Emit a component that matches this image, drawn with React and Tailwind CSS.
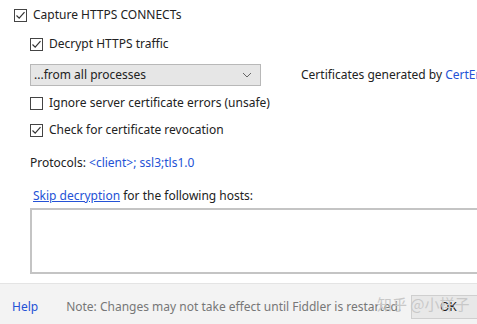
import React from "react";

const Check = ({ checked }) => (
  <span className="w-[13px] h-[13px] border border-[#444] bg-white flex items-center justify-center shrink-0">
    {checked && (
      <svg width="11" height="11" viewBox="0 0 11 11">
        <path d="M1.5 5.5 L4.2 8.2 L9.5 2.2" fill="none" stroke="#333" strokeWidth="1.2" />
      </svg>
    )}
  </span>
);

const Option = ({ checked, label, className }) => (
  <div className={`flex items-center gap-[6px] h-[20px] ${className}`}>
    <Check checked={checked} />
    <span>{label}</span>
  </div>
);

const App = () => {
  return (
    <div
      className="w-[477px] h-[324px] bg-white text-[#222] text-[12px] overflow-hidden flex flex-col relative"
      style={{ fontFamily: '"Noto Sans", "Liberation Sans", sans-serif' }}
    >
      <div className="flex-1 pl-[14px]">
        <Option checked label="Capture HTTPS CONNECTs" className="mt-[5px]" />
        <div className="pl-[16px]">
          <Option checked label="Decrypt HTTPS traffic" className="mt-[9px]" />
          <div className="flex items-center mt-[10px]">
            <div className="w-[231px] h-[22px] shrink-0 bg-[#e6e6e6] border border-[#b8b8b8] flex items-center justify-between pl-[3px] pr-[8px]">
              <span>...from all processes</span>
              <svg width="10" height="6" viewBox="0 0 10 6">
                <path d="M1 1 L5 5 L9 1" fill="none" stroke="#666" strokeWidth="1" />
              </svg>
            </div>
            <span className="ml-[40px] whitespace-nowrap">
              Certificates generated by <span className="text-[#2452d6]">CertEnroll engine</span>
            </span>
          </div>
          <Option label="Ignore server certificate errors (unsafe)" className="mt-[7px]" />
          <Option checked label="Check for certificate revocation" className="mt-[7px]" />
          <div className="mt-[13px] h-[20px] flex items-center">
            Protocols:&nbsp;<span className="text-[#2452d6]">&lt;client&gt;; ssl3;tls1.0</span>
          </div>
          <div className="mt-[13px] h-[20px] flex items-center pl-[3px]">
            <span className="text-[#2452d6] underline">Skip decryption</span>
            <span>&nbsp;for the following hosts:</span>
          </div>
          <div className="mt-[2px] h-[66px] border-2 border-[#c4c4c4] border-r-0 bg-white" />
        </div>
      </div>
      <div className="h-[41px] bg-[#f3f3f3] border-t border-[#e4e4e4] flex items-center pl-[12px] pt-[5px]">
        <span className="text-[#2452d6]">Help</span>
        <span className="ml-[28px] text-[#777] whitespace-nowrap">
          Note: Changes may not take effect until Fiddler is restarted.
        </span>
        <div className="ml-auto w-[66px] h-[24px] bg-[#e8e8e8] border border-[#cfcfcf] border-r-0 flex items-center pl-[28px] shrink-0">
          OK
        </div>
      </div>
      <span className="absolute left-[377px] top-[293px] text-[15px] text-[#c8c8c8]" style={{ fontFamily: '"Noto Sans CJK SC", sans-serif' }}>
        知乎 @小样子
      </span>
    </div>
  );
};

export default App;
